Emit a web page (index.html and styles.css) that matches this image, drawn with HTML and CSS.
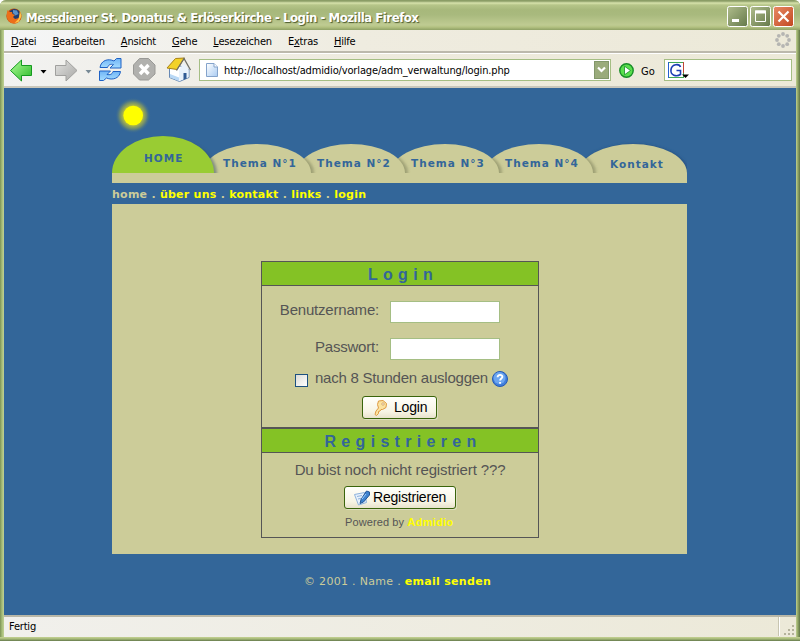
FILE: index.html
```html
<!DOCTYPE html>
<html lang="de">
<head>
<meta charset="utf-8">
<title>Messdiener St. Donatus &amp; Erlöserkirche - Login</title>
<link rel="stylesheet" href="styles.css">
</head>
<body>
<div class="window">
  <header class="titlebar">
    <svg class="fox" width="16" height="16" viewBox="0 0 16 16"><circle cx="8" cy="8" r="7.600" fill="#b9480f"/><circle cx="8.500" cy="6.500" r="5.500" fill="#1f3c70"/><path d="M7 2l4 .5 1.500 3.500-3 1.500L7 5z" fill="#5b91c7"/><path d="M1.500 2l2 2 2.500 0 .5 2 2.500 1-2 2 2 2 4-1 2-4c1 5-2 9.500-7 9.500S-1 11 1.500 2z" fill="#ed6e19"/><path d="M14 3l1.500 5-3 6-4 1 4-4z" fill="#ffc348"/></svg>
    <span class="title">Messdiener St. Donatus &amp; Erlöserkirche - Login - Mozilla Firefox</span>
    <div class="controls">
      <svg width="21" height="21" viewBox="0 0 21 21"><rect x=".5" y=".5" width="20" height="20" rx="2" fill="url(#olive)" stroke="#fff"/><path d="M5 14.500h7" stroke="#fff" stroke-width="3"/></svg>
      <svg width="21" height="21" viewBox="0 0 21 21"><rect x=".5" y=".5" width="20" height="20" rx="2" fill="url(#olive)" stroke="#fff"/><path d="M5.500 5v10.500h10V5z" fill="none" stroke="#fff"/><path d="M5 6h11" stroke="#fff" stroke-width="3"/></svg>
      <svg width="21" height="21" viewBox="0 0 21 21"><rect x=".5" y=".5" width="20" height="20" rx="2" fill="url(#red)" stroke="#fff"/><path d="M5.500 5.500l10 10m0-10l-10 10" stroke="#fff" stroke-width="2.200"/></svg>
    </div>
  </header>
  <nav class="menubar">
    <span><u>D</u>atei</span><span><u>B</u>earbeiten</span><span><u>A</u>nsicht</span><span><u>G</u>ehe</span><span><u>L</u>esezeichen</span><span>E<u>x</u>tras</span><span><u>H</u>ilfe</span>
    <svg class="throbber" width="16" height="16" viewBox="0 0 16 16" fill="#b5b5b2"><circle cx="8" cy="2" r="1.900"/><circle cx="12.200" cy="3.800" r="1.900"/><circle cx="14" cy="8" r="1.900"/><circle cx="12.200" cy="12.200" r="1.900"/><circle cx="8" cy="14" r="1.900"/><circle cx="3.800" cy="12.200" r="1.900"/><circle cx="2" cy="8" r="1.900"/><circle cx="3.800" cy="3.800" r="1.900"/></svg>
  </nav>
  <div class="toolbar">
    <svg class="icons" width="190" height="34" viewBox="4 54 190 34">
      <defs>
        <linearGradient id="olive" x2="1" y2="1"><stop stop-color="#b0bd8c"/><stop offset="1" stop-color="#65794a"/></linearGradient>
        <linearGradient id="red" x2="1" y2="1"><stop stop-color="#e88a65"/><stop offset="1" stop-color="#c24720"/></linearGradient>
        <linearGradient id="green" x2="1" y2="1"><stop stop-color="#b4ff9a"/><stop offset="1" stop-color="#28b828"/></linearGradient>
        <linearGradient id="grey" x2="1" y2="1"><stop stop-color="#e4e4e2"/><stop offset="1" stop-color="#a6a6a4"/></linearGradient>
        <linearGradient id="doc" x2="1" y2="1"><stop stop-color="#fff"/><stop offset="1" stop-color="#a9cbf2"/></linearGradient>
        <linearGradient id="sky" x2="0" y2="1"><stop stop-color="#6fb4f6"/><stop offset="1" stop-color="#a4dcff"/></linearGradient>
      </defs>
      <path d="M10.500 70.500L21.500 60v5.500h10v10h-10V81z" fill="url(#green)" stroke="#159a20"/>
      <path d="M40.500 70h6l-3 3.500z" fill="#000"/>
      <path d="M77 70.500L66 60v5.500H55.500v10H66V81z" fill="url(#grey)" stroke="#a0a09e"/>
      <path d="M85.500 70h6l-3 3.500z" fill="#788a96"/>
      <path d="M100 67.500c1-7 8-9.500 14-6.500l2.500-2.500h4.500v9.500h-11l3.500-3.500c-3-.5-5 0-6 3z" fill="url(#sky)" stroke="#1f62c5"/>
      <path d="M120.500 71.500c-1 7-8 9-14 6.500l-3 2.500H99.500V71h11l-3.500 3.500c3 .5 5 0 6-3z" fill="url(#sky)" stroke="#1f62c5"/>
      <path d="M139.500 58.500h9l6.500 6.500v9l-6.500 6h-9l-6-6v-9z" fill="#b1b1ae" stroke="#999996"/>
      <path d="M140 65l8.500 9m0-9l-8.500 9" stroke="#fff" stroke-width="3.400"/>
      <path d="M169.500 67.500l7-3 12.500 5v8l-9.500 4-10-4z" fill="#fff" stroke="#6789b4"/>
      <path d="M179 70v11l9.500-4v-8l-5-6z" fill="#e9f2fb"/>
      <path d="M167 68l8.500-9.500 9-.5-7.500 11.500z" fill="#f3d229" stroke="#a98216"/>
      <path d="M176.500 70.500l7.500-12 6.500 11.500" fill="none" stroke="#6f6f68" stroke-width="1.300"/>
      <path d="M183.500 73h3v5.500l-3 1.500z" fill="#315b94"/><path d="M170 74l9 3.500v3.500l-9-3.500z" fill="#b9d8f5"/>
    </svg>
    <div class="url">
      <svg width="12" height="14" viewBox="0 0 12 14"><path d="M.5.5h7.500l3.500 3.500v9.500H.5z" fill="url(#doc)" stroke="#84a3cb"/><path d="M8 .5V4h3.500" fill="#fff" stroke="#84a3cb"/></svg>
      <span>http://localhost/admidio/vorlage/adm_verwaltung/login.php</span>
      <svg class="drop" width="15" height="18" viewBox="0 0 15 18"><rect x=".5" y=".5" width="14" height="17" fill="#9aab7b" stroke="#82976a"/><path d="M4 6.500l3.500 3.500L11 6.500" fill="none" stroke="#fff" stroke-width="2.200"/></svg>
    </div>
    <svg class="go" width="15" height="15" viewBox="0 0 15 15"><circle cx="7.500" cy="7.500" r="6.700" fill="#59df4c" stroke="#178d27" stroke-width="1.400"/><path d="M5.500 3.200L11.500 7.500 5.500 11.800z" fill="#fff" stroke="#188a28" stroke-width=".8"/></svg>
    <span class="golabel">Go</span>
    <div class="search"><svg width="22" height="17" viewBox="0 0 22 17"><rect x=".5" y=".5" width="15" height="15" fill="#fff" stroke="#41a955"/><path d="M.5 0v16" stroke="#2461d0"/><path d="M15.500 0v11" stroke="#c14635"/><path d="M12.500 5C11.500 1.500 4 1.500 3 7.500s5.500 7.500 9.500 5V8.500H8.500" fill="none" stroke="#1b3db4" stroke-width="1.600"/><path d="M14 12.500h7l-3.500 3.500z"/></svg></div>
  </div>

  <main class="page">
    <div class="site">
      <svg class="hills" width="576" height="95" viewBox="112 88 576 95">
        <defs>
          <radialGradient id="glow"><stop offset=".5" stop-color="#c4c838"/><stop offset=".75" stop-color="#7f9664" stop-opacity=".75"/><stop offset="1" stop-color="#336699" stop-opacity="0"/></radialGradient>
          <filter id="soft" x="-20%" y="-20%" width="140%" height="140%"><feGaussianBlur stdDeviation="1.700"/></filter>
          <clipPath id="above"><path d="M112 88h575v85H112z"/></clipPath>
          <clipPath id="c2"><ellipse cx="351" cy="173" rx="54" ry="29"/></clipPath>
          <clipPath id="c3"><ellipse cx="445" cy="173" rx="54" ry="29"/></clipPath>
          <clipPath id="c4"><ellipse cx="539" cy="173" rx="54" ry="29"/></clipPath>
          <clipPath id="c5"><ellipse cx="633" cy="173" rx="54" ry="29"/></clipPath>
        </defs>
        <circle cx="133" cy="115.500" r="18" fill="url(#glow)"/><circle cx="133.200" cy="115.500" r="9.800" fill="#ff0"/>
        <g clip-path="url(#above)">
          <ellipse cx="634" cy="172" rx="54" ry="28" fill="#255181" filter="url(#soft)"/><ellipse cx="633" cy="173" rx="54" ry="29" fill="#cc9"/>
          <g clip-path="url(#c5)"><ellipse cx="541" cy="173" rx="55" ry="28" fill="#92946c" opacity=".8" filter="url(#soft)"/></g><ellipse cx="539" cy="173" rx="54" ry="29" fill="#cc9"/>
          <g clip-path="url(#c4)"><ellipse cx="447" cy="173" rx="55" ry="28" fill="#92946c" opacity=".8" filter="url(#soft)"/></g><ellipse cx="445" cy="173" rx="54" ry="29" fill="#cc9"/>
          <g clip-path="url(#c3)"><ellipse cx="353" cy="173" rx="55" ry="28" fill="#92946c" opacity=".8" filter="url(#soft)"/></g><ellipse cx="351" cy="173" rx="54" ry="29" fill="#cc9"/>
          <g clip-path="url(#c2)"><ellipse cx="259" cy="173" rx="55" ry="28" fill="#92946c" opacity=".8" filter="url(#soft)"/></g><ellipse cx="257" cy="173" rx="54" ry="29" fill="#cc9"/>
          <ellipse cx="166" cy="174" rx="51" ry="36" fill="#345066" opacity=".5" filter="url(#soft)"/><ellipse cx="163" cy="173" rx="51" ry="37" fill="#9c3"/>
        </g>
        <path d="M112 173h575v10H112z" fill="#cc9"/>
      </svg>
      <nav class="tabs"><span class="home">HOME</span><span>Thema N°1</span><span>Thema N°2</span><span>Thema N°3</span><span>Thema N°4</span><span class="last">Kontakt</span></nav>
      <div class="crumbs">home . <b>über uns</b> . <b>kontakt</b> . <b>links</b> . <b>login</b></div>
      <div class="content">
        <div class="forms">
          <section class="login">
            <h2>Login</h2>
            <div class="row"><label>Benutzername:</label><input type="text"></div>
            <div class="row second"><label>Passwort:</label><input type="password"></div>
            <div class="remember"><i class="check"></i><span>nach 8 Stunden ausloggen</span>
              <svg width="16" height="16" viewBox="0 0 16 16"><circle cx="8" cy="8" r="7.500" fill="#407fdc" stroke="#2359b5"/><circle cx="7.500" cy="7" r="6" fill="#6ca6f0"/><path d="M5.600 6.200C5.600 3 10.600 3.300 10.400 6c-.1 1.500-2.300 1.600-2.300 3.500M8.100 11v1.700" fill="none" stroke="#fff" stroke-width="1.900"/></svg></div>
            <button class="btn b1"><svg width="16" height="16" viewBox="0 0 16 16"><path d="M5.500 1l4.500-.5 3.500 3-.5 4-3.500 2H8l-1 1.500-1.500.5v2L3.500 15.500l-1.500-1 1-3.500 2.500-3-1-3.500z" fill="#fbe3a0" stroke="#dd9a42"/><circle cx="10" cy="4" r="1.200" fill="#fff" stroke="#c98d41" stroke-width=".7"/></svg><span>Login</span></button>
          </section>
          <section class="register">
            <h2>Registrieren</h2>
            <p class="ask">Du bist noch nicht registriert ???</p>
            <button class="btn b2"><svg width="16" height="16" viewBox="0 0 16 16"><path d="M.5 4.500l10-2 2 10-8 2.500z" fill="#e7f1fc" stroke="#8fb3dc"/><path d="M3 6.500l5-1M4 9l3-.7" stroke="#8fb3dc"/><path d="M12.500 1l3 1v3l-6 7-3.500 1.500 1-4z" fill="#3f83cf" stroke="#245898"/><path d="M12 4l-4 5" stroke="#9bd0ff"/></svg><span>Registrieren</span></button>
            <p class="power">Powered by <b>Admidio</b></p>
          </section>
        </div>
      </div>
      <footer>© 2001 . Name . <b>email senden</b></footer>
    </div>
  </main>
  <div class="status"><span>Fertig</span><i></i><svg width="13" height="13" viewBox="0 0 13 13" fill="#b4b29b"><path d="M9 1h2v2H9zM5 5h2v2H5zM9 5h2v2H9zM1 9h2v2H1zM5 9h2v2H5zM9 9h2v2H9z"/></svg></div>
</div>
</body>
</html>
```
FILE: styles.css
```css
* { box-sizing: border-box; }
body { margin: 0; overflow: hidden; font-family: "DejaVu Sans Condensed", "DejaVu Sans", sans-serif; font-size: 11px; color: #000; }
svg { display: block; flex: none; }
.window { width: 800px; height: 641px; padding: 0 4px 4px; display: flex; flex-direction: column; border-radius: 6px 6px 0 0; background: linear-gradient(to bottom, transparent 637px, #c5d193 637px, #a4b877 639px, #64794c 641px), linear-gradient(to right, #7c9256, #a6bd78 2px, #c1d196 4px, #c1d196 796px, #a6b974 797px, #5f7445 800px); }
.titlebar { height: 30px; margin: 0 -4px; padding: 6px 6px 0; display: flex; align-items: flex-start; border-radius: 6px 6px 0 0; background: linear-gradient(#8b9d66 0, #8b9d66 1px, #d7e2ac 3px, #b6c589 5px, #a7b87b 10px, #a9ba7e 15px, #bfcb92 25px, #b4c282 27px, #8fa165 30px); }
.fox { margin-top: 2px; }
.title { margin-left: 4px; width: 420px; font: bold 13px/23px "DejaVu Sans Condensed"; letter-spacing: -.46px; color: #fff; text-shadow: 1px 1px 1px #4b5a2d; white-space: nowrap; }
.controls { margin-left: auto; display: flex; gap: 2px; }
.menubar { height: 23px; display: flex; gap: 16px; padding: 0 5px 0 7px; line-height: 23px; background: linear-gradient(to right, #f5f6f7, #efece0 45%, #ece9d8); border-bottom: 2px solid #bcb9ac; letter-spacing: -.2px; }
.throbber { margin: 2px 0 0 auto; }
.toolbar { height: 35px; display: flex; background: linear-gradient(to right, #f2f2f1, #eeebde 45%, #ece9d8); border-top: 1px solid #fff; border-bottom: 2px solid #c9c7bb; }
.url { width: 412px; height: 22px; margin: 5px 0 0 5px; padding: 0 1px 0 6px; display: flex; align-items: center; background: #fff; border: 1px solid #a5be84; letter-spacing: -.14px; }
.url span { margin: 1px 0 0 6px; white-space: nowrap; }
.drop { margin-left: auto; }
.go { margin: 9px 0 0 8px; }
.golabel { margin-left: 7px; width: 16px; line-height: 35px; }
.search { width: 128px; height: 22px; margin: 5px 0 0 7px; padding: 2px 3px; background: #fff; border: 1px solid #a5be84; }
.page { height: 527px; background: #369; }
.site { width: 576px; margin-left: 108px; font-family: "DejaVu Sans", sans-serif; }
.hills { margin-bottom: -34px; }
.tabs { height: 34px; display: flex; position: relative; color: #369; font-weight: bold; font-size: 10.5px; letter-spacing: 1px; line-height: 29px; white-space: nowrap; }
.tabs span { width: 94px; padding-left: 9px; }
.tabs .home { width: 102px; padding-left: 32px; line-height: 19px; }
.tabs .last { padding-left: 20px; line-height: 31px; }
.crumbs { height: 21px; line-height: 23px; font-size: 11px; font-weight: bold; color: #cc9; letter-spacing: .25px; white-space: nowrap; }
b { color: #ff0; }
.content { width: 575px; height: 350px; padding: 57px 0 0 149px; background: #cc9; }
.forms { width: 278px; font-family: "Liberation Sans", sans-serif; color: #555; }
section { border: 1px solid #555; }
.login { height: 167px; }
.register { height: 110px; }
h2 { margin: 0; padding-left: 6px; height: 24px; background: #84c225; border-bottom: 1px solid #555; font-size: 16px; line-height: 25px; color: #369; letter-spacing: 5.3px; text-align: center; }
.register h2 { line-height: 26px; }
.row { height: 22px; margin-top: 15px; display: flex; }
.row label { width: 117px; text-align: right; font-size: 15px; line-height: 18px; letter-spacing: -.2px; }
.row input { width: 110px; height: 22px; margin-left: 11px; padding: 0; border: 1px solid #a5be84; background: #fff; border-radius: 0; }
.remember { height: 18px; margin: 10px 0 0 33px; display: flex; align-items: center; font-size: 15px; letter-spacing: -.23px; white-space: nowrap; }
.remember span { width: 173px; margin-left: 7px; line-height: 16px; padding-bottom: 2px; }
.remember svg { margin-left: 4px; }
.check { width: 13px; height: 13px; margin-top: 3px; border: 1px solid #1c5180; background: linear-gradient(135deg, #dcdcd7, #fff); }
.btn { height: 23px; padding: 0; display: flex; align-items: center; border: 1px solid #3a640b; border-radius: 3px; background: linear-gradient(#fffffb, #f7f4e4 70%, #e8e2cc); color: #000; font: 14px "Liberation Sans"; letter-spacing: -.2px; box-shadow: 1px 1px 0 #ddddc0; }
.btn span { padding-bottom: 2px; }
.b1 { width: 75px; margin: 8px 0 0 100px; padding-left: 10px; }
.b1 span { margin-left: 5px; }
.b2 { width: 112px; margin: 8px 0 0 82px; padding-left: 9px; }
.b2 span { margin-left: 3px; }
.ask { margin: 8px 0 0; height: 17px; text-align: center; font-size: 15px; line-height: 17px; letter-spacing: -.13px; white-space: nowrap; }
.power { margin: 7px 0 0 83px; font-size: 11px; line-height: 13px; letter-spacing: .1px; white-space: nowrap; }
.power b { letter-spacing: .3px; }
footer { width: 575px; height: 54px; line-height: 55px; padding-left: 192px; color: #cc9; letter-spacing: .3px; white-space: nowrap; }
.status { height: 22px; border-top: 2px solid #b9b7a7; background: linear-gradient(to right, #f1f0ec, #ece9d8); display: flex; line-height: 20px; padding-left: 5px; letter-spacing: -.2px; }
.status i { margin-left: auto; height: 19px; width: 2px; background: #c8c5b1; border-right: 1px solid #fff; }
.status svg { margin: 7px 0 0 3px; }
```
